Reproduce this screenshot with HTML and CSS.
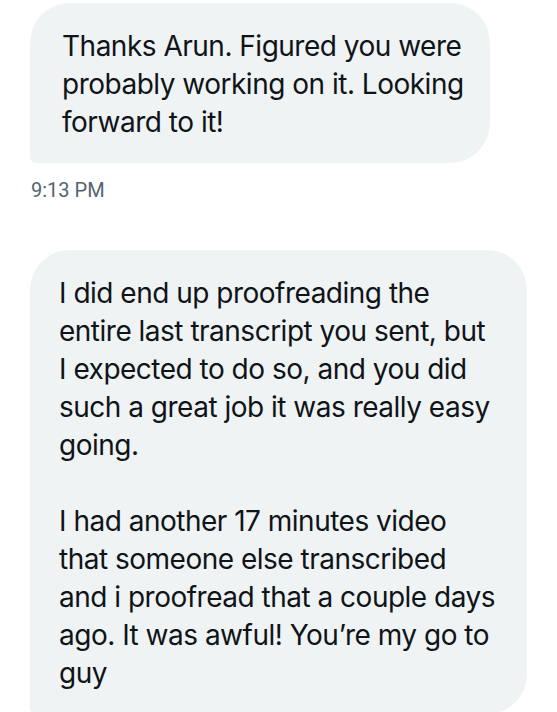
FILE: index.html
```html
<!DOCTYPE html>
<html lang="en">
<head>
  <meta charset="UTF-8">
  <meta name="viewport" content="width=device-width, initial-scale=1.0">
  <title>Messages</title>
  <link rel="stylesheet" href="styles.css">
</head>
<body>
  <div class="thread">
    <div class="msg">
      <div class="bubble bubble-short">
        <p>Thanks Arun. Figured you were probably working on it. Looking forward to it!</p>
      </div>
      <div class="time">9:13 PM</div>
    </div>

    <div class="msg msg-long">
      <div class="bubble bubble-long">
        <p>I did end up proofreading the entire last transcript you sent, but I expected to do so, and you did such a great job it was really easy going.</p>
        <p>I had another 17 minutes video that someone else transcribed and i proofread that a couple days ago. It was awful! You’re my go to guy</p>
      </div>
    </div>
  </div>
</body>
</html>
```

FILE: styles.css
```css
body {
  margin: 0;
  background: #fff;
  font-family: 'Inter', 'Roboto', sans-serif;
  color: #0f1419;
}

.thread {
  display: flex;
  flex-direction: column;
  padding: 3px 0 0 30px;
}

.bubble {
  background: #eff3f4;
  border-radius: 40px 40px 40px 6px;
  font-size: 28px;
  line-height: 38px;
  letter-spacing: -0.5px;
  padding: 24px 30px 22px 29px;
  box-sizing: border-box;
}

.bubble p {
  margin: 0;
}

.bubble p + p {
  margin-top: 38px;
}

.bubble-short {
  width: 460px;
  padding-left: 32px;
  padding-right: 18px;
}

.bubble-long {
  width: 497px;
}

.time {
  font-family: 'Roboto', sans-serif;
  font-size: 20px;
  color: #536471;
  margin: 15px 0 0 1px;
}

.msg-long {
  margin-top: 48px;
}
```
